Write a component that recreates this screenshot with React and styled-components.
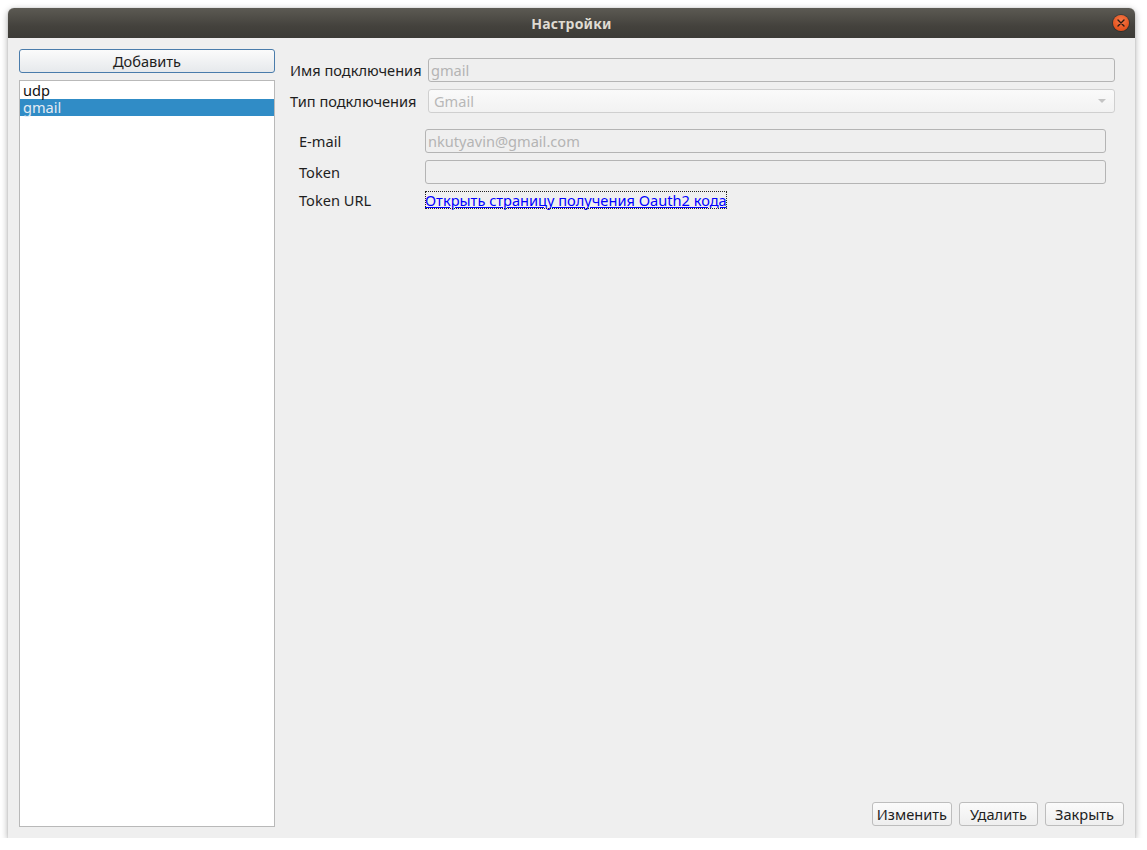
import React, { useState } from "react";
import styled, { createGlobalStyle } from "styled-components";

const GlobalStyle = createGlobalStyle`
  html, body {
    margin: 0;
    padding: 0;
    background: #ffffff;
  }
  body {
    font-family: "Noto Sans", "Open Sans", sans-serif;
    font-size: 14.6px;
    color: #222222;
  }
`;

const connections = [
  { id: "udp", name: "udp" },
  { id: "gmail", name: "gmail" },
];

const App = () => {
  const [selected, setSelected] = useState("gmail");

  return (
    <>
      <GlobalStyle />
      <Window>
        <TitleBar>
          <Title>Настройки</Title>
          <CloseButton aria-label="close">
            <svg width="8" height="8" viewBox="0 0 8 8">
              <path d="M1 1L7 7M7 1L1 7" stroke="#2b1a12" strokeWidth="1.4" strokeLinecap="round" />
            </svg>
          </CloseButton>
        </TitleBar>

        <Body>
          <Sidebar>
            <AddButton>Добавить</AddButton>
            <List>
              {connections.map((c) => (
                <ListItem key={c.id} $active={c.id === selected} onClick={() => setSelected(c.id)}>
                  {c.name}
                </ListItem>
              ))}
            </List>
          </Sidebar>

          <Content>
            <Form>
              <Label>Имя подключения</Label>
              <Input disabled value="gmail" readOnly />
              <Label>Тип подключения</Label>
              <Combo>
                <ComboText>Gmail</ComboText>
                <Arrow />
              </Combo>
            </Form>

            <Group>
              <Label>E-mail</Label>
              <Input disabled value="nkutyavin@gmail.com" readOnly />
              <Label>Token</Label>
              <Input disabled value="" readOnly />
              <Label>Token URL</Label>
              <LinkCell>
                <Link href="#">Открыть страницу получения Oauth2 кода</Link>
              </LinkCell>
            </Group>

            <Spacer />

            <Actions>
              <Button>Изменить</Button>
              <Button>Удалить</Button>
              <Button>Закрыть</Button>
            </Actions>
          </Content>
        </Body>
      </Window>
    </>
  );
};

const Window = styled.div`
  margin: 8px 0 0 8px;
  width: 1127px;
  height: 830px;
  display: flex;
  flex-direction: column;
  background: #efefef;
  border-radius: 6px 6px 0 0;
  box-shadow: 0 2px 7px rgba(0, 0, 0, 0.35), 0 0 1px rgba(0, 0, 0, 0.3);
  overflow: hidden;
`;

const TitleBar = styled.div`
  position: relative;
  height: 30px;
  flex: none;
  display: flex;
  align-items: center;
  justify-content: center;
  background: linear-gradient(to bottom, #5c5a53, #44423d 60%, #3c3b37);
`;

const Title = styled.div`
  color: #dfdbd2;
  font-weight: bold;
  font-size: 14px;
  letter-spacing: 0.2px;
`;

const CloseButton = styled.div`
  position: absolute;
  right: 6px;
  top: 7px;
  width: 16px;
  height: 16px;
  border-radius: 50%;
  background: radial-gradient(circle at 50% 35%, #f57a4a, #e4521d 70%, #c9440f);
  box-shadow: 0 0 0 1px rgba(0, 0, 0, 0.25);
  display: flex;
  align-items: center;
  justify-content: center;
`;

const Body = styled.div`
  flex: 1;
  display: flex;
  padding: 11px;
  min-height: 0;
`;

const Sidebar = styled.div`
  width: 256px;
  flex: none;
  display: flex;
  flex-direction: column;
  gap: 7px;
`;

const AddButton = styled.button`
  height: 24px;
  border: 1px solid #4a7cab;
  border-radius: 3px;
  background: linear-gradient(to bottom, #fbfbfb, #e6e9ec);
  font-family: inherit;
  font-size: 14.6px;
  color: #1e1e1e;
  padding: 0;
`;

const List = styled.div`
  flex: 1;
  background: #ffffff;
  border: 1px solid #b9b9b9;
  padding-top: 1px;
`;

const ListItem = styled.div`
  height: 17px;
  line-height: 17px;
  padding-left: 3px;
  font-size: 14.6px;
  color: ${(p) => (p.$active ? "#e3ebf3" : "#111111")};
  background: ${(p) => (p.$active ? "#308cc6" : "transparent")};
  cursor: default;
`;

const Content = styled.div`
  flex: 1;
  display: flex;
  flex-direction: column;
  padding-left: 15px;
`;

const Form = styled.div`
  display: grid;
  grid-template-columns: 138px 1fr;
  row-gap: 7px;
  align-items: center;
  margin-top: 9px;
  margin-right: 9px;
`;

const Group = styled.div`
  display: grid;
  grid-template-columns: 126px 1fr;
  grid-template-rows: 24px 24px 18px;
  row-gap: 7px;
  align-items: center;
  margin: 16px 18px 0 9px;
`;

const Label = styled.div`
  font-size: 14.6px;
  color: #1e1e1e;
  white-space: nowrap;
`;

const Input = styled.input`
  height: 24px;
  box-sizing: border-box;
  border: 1px solid #b4b4b4;
  border-radius: 3px;
  background: #efefef;
  font-family: inherit;
  font-size: 14.6px;
  color: #b4b4b4;
  padding: 0 2px;
  width: 100%;
  outline: none;

  &:disabled {
    color: #b4b4b4;
  }
`;

const Combo = styled.div`
  height: 24px;
  box-sizing: border-box;
  border: 1px solid #cfcfcf;
  border-radius: 3px;
  background: linear-gradient(to bottom, #fafafa, #f2f2f2);
  display: flex;
  align-items: center;
  padding: 0 8px 0 5px;
`;

const ComboText = styled.span`
  flex: 1;
  color: #b8b8b8;
  font-size: 14.6px;
`;

const Arrow = styled.span`
  width: 0;
  height: 0;
  border-left: 4px solid transparent;
  border-right: 4px solid transparent;
  border-top: 4px solid #c4c4c4;
`;

const LinkCell = styled.div`
  display: flex;
`;

const Link = styled.a`
  color: #0000ff;
  font-size: 14.6px;
  text-decoration: underline;
  outline: 1px dotted #222;
  outline-offset: -1px;
  line-height: 18px;
`;

const Spacer = styled.div`
  flex: 1;
`;

const Actions = styled.div`
  display: flex;
  justify-content: flex-end;
  gap: 7px;
  margin-bottom: 1px;
`;

const Button = styled.button`
  height: 24px;
  min-width: 79px;
  box-sizing: border-box;
  border: 1px solid #bdbdbd;
  border-radius: 3px;
  background: linear-gradient(to bottom, #fbfbfb, #eeeeee);
  font-family: inherit;
  font-size: 14.6px;
  color: #1e1e1e;
  padding: 0 4px;
`;

export default App;
